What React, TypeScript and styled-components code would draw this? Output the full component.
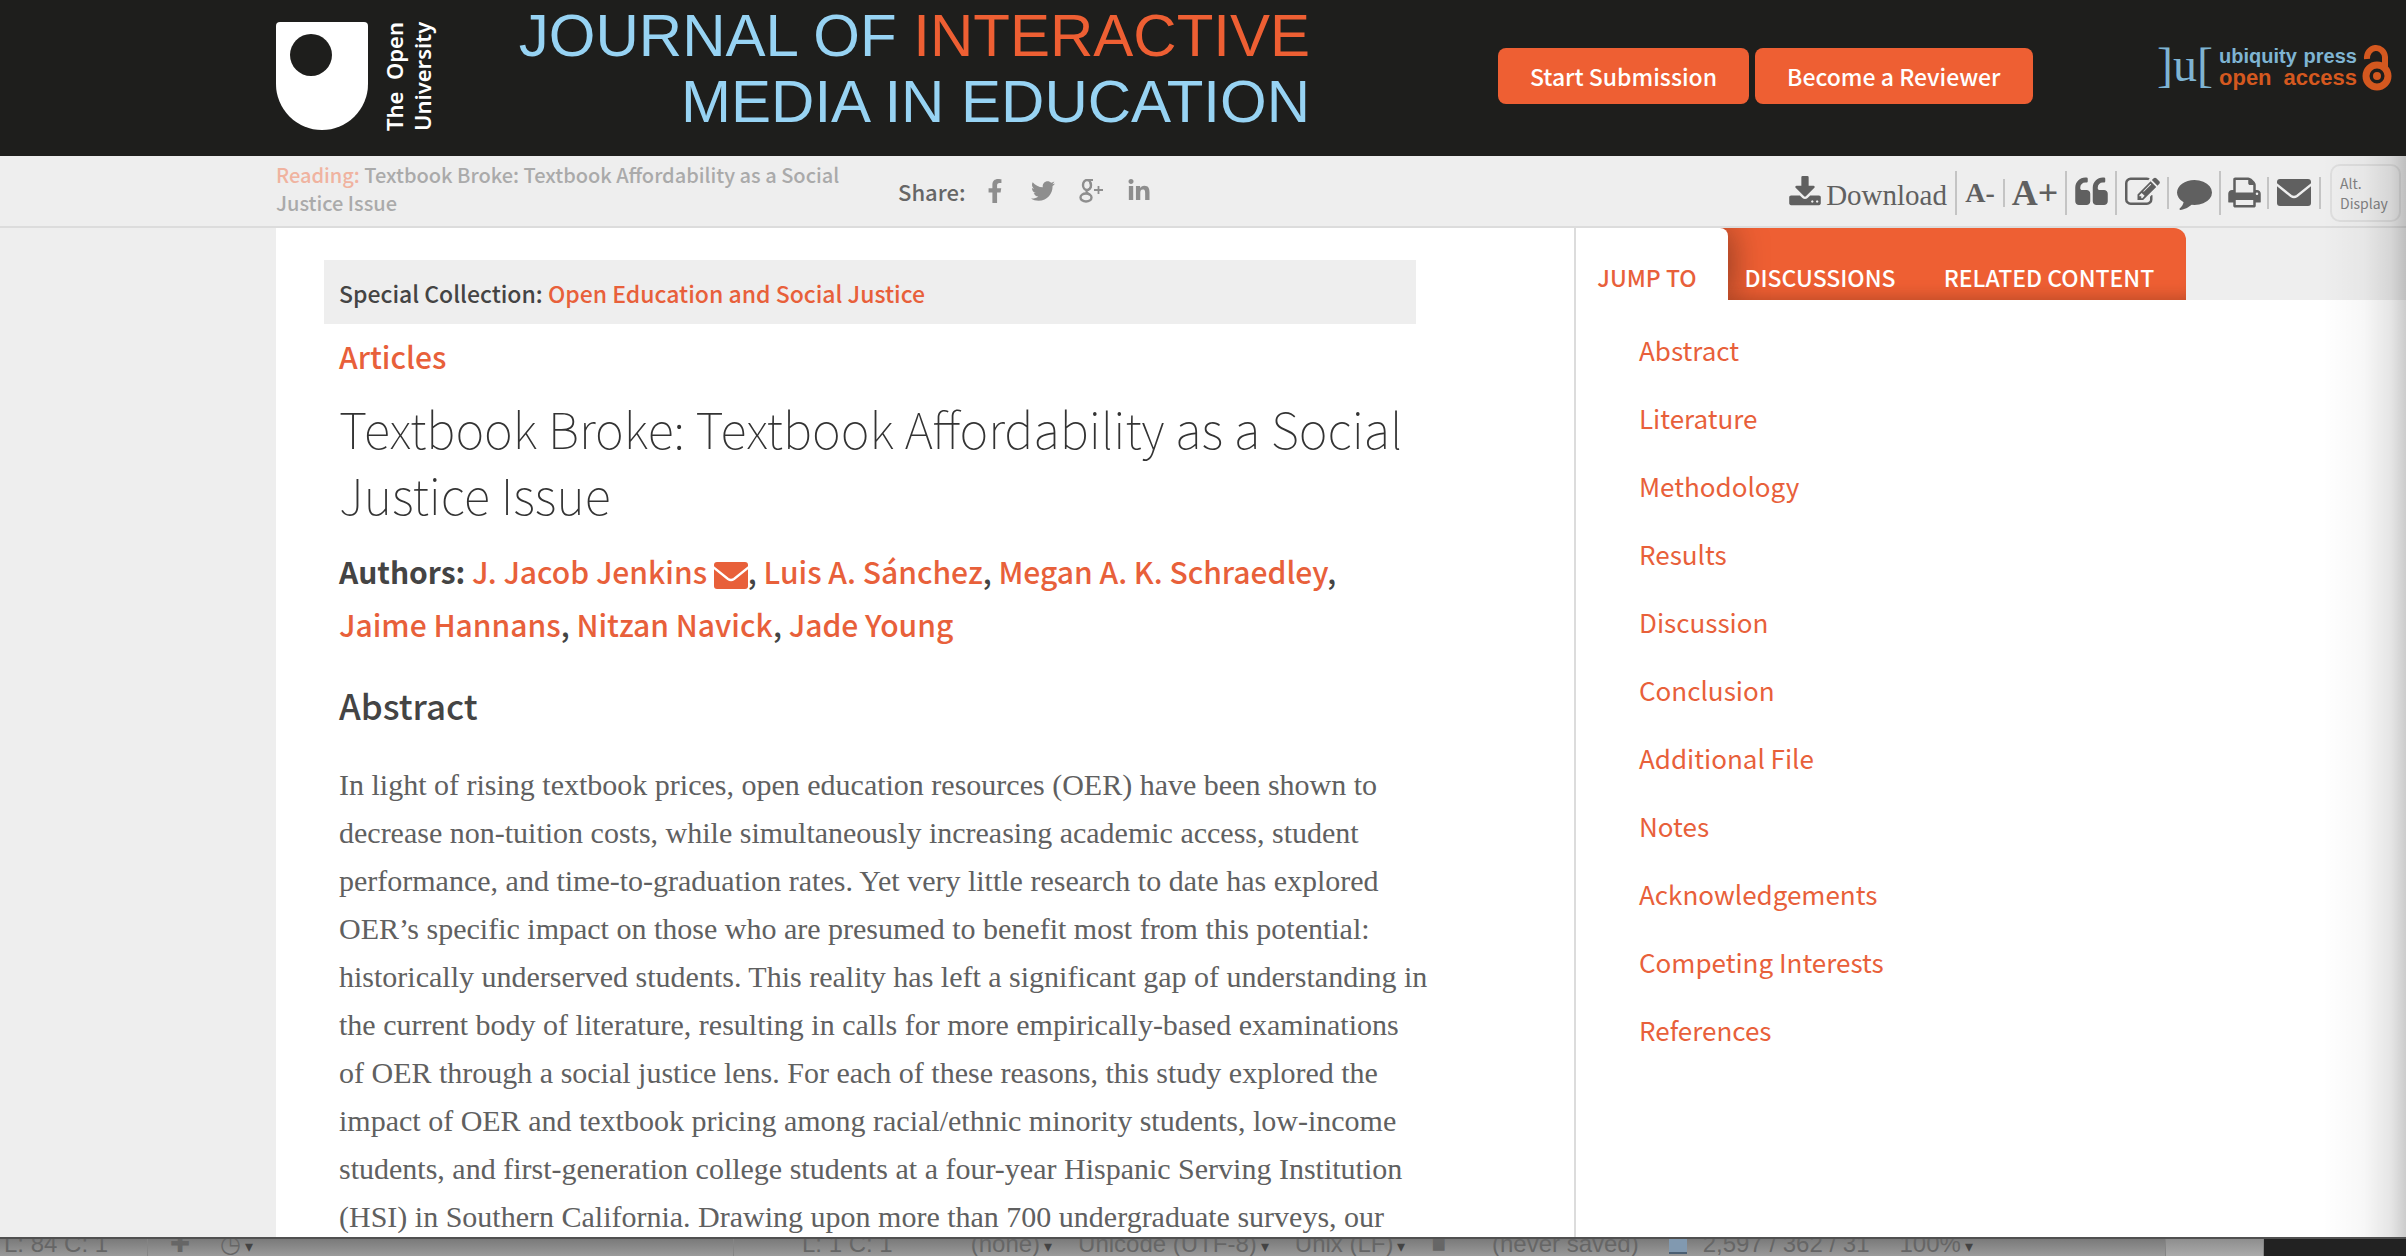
import React from "react";
import styled, { createGlobalStyle } from "styled-components";
import { FaTwitter, FaLinkedinIn, FaFacebookF } from "react-icons/fa";

const sans = `"Noto Sans CJK SC", "Open Sans", sans-serif`;
const serif = `"Liberation Serif", "Times New Roman", serif`;
const orange = "#ee5f33";
const linkOrange = "#e8603a";

const GlobalStyle = createGlobalStyle`
  * { box-sizing: border-box; }
  body { margin: 0; background: #eee; font-family: ${sans}; color: #444; }
  a { color: ${linkOrange}; text-decoration: none; }
  button { font: inherit; border: 0; margin: 0; padding: 0; background: none; cursor: pointer; }
  h1, h2, h3, p, ul { margin: 0; padding: 0; }
`;

const Desktop = styled.div`
  height: 100vh;
  display: flex;
  flex-direction: column;
  overflow: hidden;
`;
const BrowserWindow = styled.div`
  position: relative;
  flex: 1;
  min-height: 0;
  display: flex;
  flex-direction: column;
  overflow: hidden;
`;
const EdgeShade = styled.div`
  position: absolute;
  top: 156px;
  right: 0;
  bottom: 0;
  width: 84px;
  pointer-events: none;
  background: linear-gradient(to right, rgba(0, 0, 0, 0), rgba(0, 0, 0, 0.03) 50%, rgba(0, 0, 0, 0.1) 82%, rgba(0, 0, 0, 0.2));
`;

const Header = styled.header`
  flex: none;
  display: flex;
  height: 156px;
  padding: 0 14px 0 276px;
  background: #1e1e1c;
`;
const OpenLogo = styled.a`
  display: flex;
  gap: 12px;
  padding-top: 22px;
`;
const OpenName = styled.span`
  height: 109px;
  writing-mode: vertical-rl;
  transform: rotate(180deg);
  font: 600 22px/28px "Noto Sans", sans-serif;
  text-align: justify;
  text-align-last: justify;
  white-space: nowrap;
  color: #fff;
`;
const JournalTitle = styled.h1`
  width: 796px;
  margin-left: 78px;
  padding-top: 3px;
  font: 400 60px/66px "Liberation Sans", Arial, sans-serif;
  white-space: nowrap;
  text-align: right;
  color: #97d3f3;
`;
const Accent = styled.span`
  color: ${orange};
`;
const HeaderActions = styled.div`
  display: flex;
  gap: 6px;
  margin: 48px 0 0 188px;
`;
const ActionButton = styled.button`
  height: 56px;
  padding: 0 32px;
  border-radius: 8px;
  background: ${orange};
  color: #fff;
  font-size: 23px;
  font-weight: 500;
  white-space: nowrap;
`;
const Brand = styled.a`
  display: flex;
  margin: 44px 0 0 auto;
  height: 48px;
`;
const BrandMark = styled.span`
  font: 400 48px/42px "Liberation Serif", serif;
  color: #7fb4d2;
`;
const BrandWords = styled.span`
  display: flex;
  flex-direction: column;
  width: 138px;
  margin: 2px 5px 0 6px;
  font: 700 20px/21px "Liberation Sans", Arial, sans-serif;
  text-align-last: justify;
  white-space: nowrap;
  color: #7fb4d2;
`;
const BrandAccess = styled.span`
  font-size: 22px;
  color: #d4581f;
`;

const Toolbar = styled.div`
  flex: none;
  display: flex;
  align-items: center;
  height: 72px;
  padding: 0 5px 0 276px;
  background: #eee;
  border-bottom: 2px solid #dcdcdc;
`;
const Reading = styled.p`
  width: 622px;
  padding: 0 50px 5px 0;
  font-size: 20px;
  line-height: 28px;
  font-weight: 500;
  color: #aaa;
`;
const ReadingLabel = styled.span`
  color: #f0b3a0;
`;
const Share = styled.div`
  display: flex;
  align-items: center;
  gap: 18px;
`;
const ShareLinks = styled.div`
  display: flex;
  align-items: center;
  gap: 24px;
`;
const ShareLabel = styled.span`
  font-size: 22px;
  font-weight: 500;
  color: #666;
`;
const ShareLink = styled.a`
  display: flex;
  justify-content: center;
  width: 24px;
  font-size: 24px;
  color: #8e8e8e;
`;
const Tools = styled.div`
  display: flex;
  align-items: center;
  margin-left: auto;
  padding-top: 3px;
  color: #606060;
`;
const Tool = styled.button<{ $width?: number; $rule?: number }>`
  display: flex;
  align-items: center;
  justify-content: center;
  width: ${(p) => (p.$width ? `${p.$width}px` : "auto")};
  height: ${(p) => p.$rule ?? 44}px;
  border-right: 2px solid #c4c4c4;
  color: #606060;
`;
const DownloadTool = styled(Tool)`
  gap: 4px;
  padding-right: 8px;
  font-family: ${serif};
  font-size: 29px;
`;
const DownloadText = styled.span`
  padding-top: 6px;
`;
const Letter = styled.span<{ $size: number }>`
  font: 700 ${(p) => p.$size}px/44px ${serif};
`;
const AltDisplay = styled.button`
  width: 71px;
  height: 58px;
  margin-left: 9px;
  padding-left: 8px;
  border: 2px solid #dedede;
  border-radius: 10px;
  font-size: 14px;
  line-height: 20px;
  text-align: left;
  color: #828282;
`;

const Body = styled.div`
  flex: 1;
  min-height: 0;
  display: flex;
  padding-left: 276px;
  background: #eee;
`;
const Article = styled.main`
  flex: 1;
  min-width: 0;
  padding: 32px 158px 0 48px;
  background: #fff;
`;
const Collection = styled.div`
  height: 64px;
  padding: 0 15px;
  background: #eee;
  font-size: 23px;
  line-height: 66px;
  font-weight: 500;
`;
const Content = styled.div`
  padding-left: 15px;
`;
const Section = styled.h3`
  margin-top: 8px;
  font-size: 30px;
  line-height: 48px;
  font-weight: 500;
  color: ${linkOrange};
`;
const Title = styled.h2`
  margin-top: 15px;
  font-size: 49px;
  line-height: 66px;
  font-weight: 100;
  color: #333;
`;
const Authors = styled.p`
  margin-top: 18px;
  font-size: 30px;
  line-height: 53px;
  font-weight: 500;
  white-space: nowrap;
`;
const AuthorsLabel = styled.strong`
  font-weight: 700;
`;
const Mail = styled.svg`
  vertical-align: -5px;
`;
const Heading = styled.h3`
  margin-top: 30px;
  font-size: 35px;
  line-height: 48px;
  font-weight: 500;
`;
const Abstract = styled.p`
  margin-top: 32px;
  font: 400 30px/48px ${serif};
  color: #606060;
`;
const Line = styled.span`
  display: block;
  white-space: nowrap;
`;

const Sidebar = styled.aside`
  flex: none;
  width: 832px;
  border-left: 2px solid #dcdcdc;
  background: #fff;
`;
const TabStrip = styled.div`
  display: flex;
  height: 72px;
  background: #eee;
`;
const TabGroup = styled.div`
  display: flex;
  width: 610px;
  overflow: hidden;
  border-radius: 0 12px 0 0;
  background: ${orange};
  box-shadow: inset 0 -14px 16px -12px rgba(100, 40, 20, 0.4);
`;
const Tab = styled.button<{ $active?: boolean; $width: number }>`
  width: ${(p) => p.$width}px;
  height: 72px;
  padding: 26px ${(p) => (p.$active ? 10 : 2)}px 0 0;
  font-size: 23px;
  font-weight: 500;
  white-space: nowrap;
  border-radius: ${(p) => (p.$active ? "0 8px 0 0" : "0")};
  color: ${(p) => (p.$active ? linkOrange : "#fff")};
  background: ${(p) => (p.$active ? "#fff" : "transparent")};
  box-shadow: ${(p) => (p.$active ? "4px 0 32px rgba(60, 30, 20, 0.5)" : "none")};
`;
const Toc = styled.ul`
  padding: 16px 0 0 63px;
  list-style: none;
`;
const TocItem = styled.li`
  font-size: 26px;
  line-height: 68px;
`;

const EditorStrip = styled.footer`
  flex: none;
  display: flex;
  height: 19px;
  overflow: hidden;
  border-top: 2px solid #505050;
  background: #222;
`;
const StripCell = styled.div<{ $width?: number; $inset?: number; $light?: boolean }>`
  display: flex;
  gap: 26px;
  flex: ${(p) => (p.$width ? "none" : "1")};
  width: ${(p) => (p.$width ? `${p.$width}px` : "auto")};
  padding-left: ${(p) => p.$inset ?? 4}px;
  border-right: 1px solid #858585;
  background: ${(p) => (p.$light ? "linear-gradient(#8e8e8e, #aaa)" : "linear-gradient(#7a7a7a, #9a9a9a)")};
  font: 400 24px/10px "Liberation Sans", Arial, sans-serif;
  white-space: nowrap;
  color: #666;
`;
const StripDesktop = styled.div`
  flex: none;
  width: 142px;
`;
const StripText = styled.span<{ $arrow?: boolean; $after?: number }>`
  margin-right: ${(p) => p.$after ?? 0}px;
  &::after {
    content: "${(p) => (p.$arrow ? "▾" : "")}";
    color: #444;
    font-size: 16px;
    margin-left: 4px;
  }
`;
const FileIcon = styled.span`
  width: 18px;
  height: 15px;
  background: #8199b0;
  border-bottom: 2px solid #4b5f73;
  margin-right: -10px;
`;

const Glyph = ({ d, size = 35 }: { d: string; size?: number }) => (
  <svg width={size} height={size} viewBox="0 0 1792 1792" fill="currentColor" aria-hidden="true">
    <path d={d} />
  </svg>
);

const icons = {
  download:
    "M1344 1344q0-26-19-45t-45-19-45 19-19 45 19 45 45 19 45-19 19-45zm256 0q0-26-19-45t-45-19-45 19-19 45 19 45 45 19 45-19 19-45zm128-224v320q0 40-28 68t-68 28h-1472q-40 0-68-28t-28-68v-320q0-40 28-68t68-28h465l135 136q58 56 136 56t136-56l136-136h464q40 0 68 28t28 68zm-325-569q17 41-14 70l-448 448q-18 19-45 19t-45-19l-448-448q-31-29-14-70 17-39 59-39h256v-448q0-26 19-45t45-19h256q26 0 45 19t19 45v448h256q42 0 59 39z",
  quote:
    "M832 960v384q0 80-56 136t-136 56h-384q-80 0-136-56t-56-136v-704q0-104 40.5-198.5t109.5-163.5 163.5-109.5 198.5-40.5h64q26 0 45 19t19 45v128q0 26-19 45t-45 19h-64q-106 0-181 75t-75 181v32q0 40 28 68t68 28h224q80 0 136 56t56 136zm896 0v384q0 80-56 136t-136 56h-384q-80 0-136-56t-56-136v-704q0-104 40.5-198.5t109.5-163.5 163.5-109.5 198.5-40.5h64q26 0 45 19t19 45v128q0 26-19 45t-45 19h-64q-106 0-181 75t-75 181v32q0 40 28 68t68 28h224q80 0 136 56t56 136z",
  edit: "M888 1184l116-116-152-152-116 116v56h96v96h56zm440-720q-16-16-33 1l-350 350q-17 17-1 33t33-1l350-350q17-17 1-33zm80 594v190q0 119-84.5 203.5t-203.5 84.5h-832q-119 0-203.5-84.5t-84.5-203.5v-832q0-119 84.5-203.5t203.5-84.5h832q63 0 117 25 15 7 18 23 3 17-9 29l-49 49q-14 14-32 8-23-6-45-6h-832q-66 0-113 47t-47 113v832q0 66 47 113t113 47h832q66 0 113-47t47-113v-126q0-13 9-22l64-64q15-15 35-7t20 29zm-96-738l288 288-672 672h-288v-288zm444 132l-92 92-288-288 92-92q28-28 68-28t68 28l152 152q28 28 28 68t-28 68z",
  comment:
    "M1792 896q0 174-120 321.5t-326 233-450 85.5q-70 0-145-8-198 175-460 242-49 14-114 22-17 2-30.5-9t-17.5-29v-1q-3-4-.5-12t2-10 4.5-9.5l6-9 7-8.5 8-9q7-8 31-34.5t34.5-38 31-39.5 32.5-51 27-59 26-76q-157-89-247.5-220t-90.5-281q0-130 71-248.5t191-204.5 286-136.5 348-50.5q244 0 450 85.5t326 233 120 321.5z",
  print:
    "M448 1536h896v-256h-896v256zm0-640h896v-384h-160q-40 0-68-28t-28-68v-160h-640v640zm1152 64q0-26-19-45t-45-19-45 19-19 45 19 45 45 19 45-19 19-45zm128 0v416q0 13-9.5 22.5t-22.5 9.5h-224v160q0 40-28 68t-68 28h-960q-40 0-68-28t-28-68v-160h-224q-13 0-22.5-9.5t-9.5-22.5v-416q0-79 56.5-135.5t135.5-56.5h64v-544q0-40 28-68t68-28h672q40 0 88 20t76 48l152 152q28 28 48 76t20 88v256h64q79 0 135.5 56.5t56.5 135.5z",
};

const Envelope = ({ line }: { line: string }) => (
  <Mail width="34" height="27" viewBox="0 0 34 27" aria-hidden="true">
    <rect width="34" height="27" rx="3" fill="currentColor" />
    <path d="M-1 5 L14 17 Q17 19 20 17 L35 5" fill="none" stroke={line} strokeWidth="2.4" />
  </Mail>
);

const abstractLines = [
  "In light of rising textbook prices, open education resources (OER) have been shown to",
  "decrease non-tuition costs, while simultaneously increasing academic access, student",
  "performance, and time-to-graduation rates. Yet very little research to date has explored",
  "OER’s specific impact on those who are presumed to benefit most from this potential:",
  "historically underserved students. This reality has left a significant gap of understanding in",
  "the current body of literature, resulting in calls for more empirically-based examinations",
  "of OER through a social justice lens. For each of these reasons, this study explored the",
  "impact of OER and textbook pricing among racial/ethnic minority students, low-income",
  "students, and first-generation college students at a four-year Hispanic Serving Institution",
  "(HSI) in Southern California. Drawing upon more than 700 undergraduate surveys, our",
];

const tocEntries = [
  "Abstract",
  "Literature",
  "Methodology",
  "Results",
  "Discussion",
  "Conclusion",
  "Additional File",
  "Notes",
  "Acknowledgements",
  "Competing Interests",
  "References",
];

export default function App() {
  return (
    <Desktop>
      <GlobalStyle />
      <BrowserWindow>
        <Header>
          <OpenLogo href="#">
            <svg width="92" height="108" viewBox="0 0 92 108" aria-hidden="true">
              <path d="M4 0H88Q92 0 92 4V62A46 46 0 0 1 0 62V4Q0 0 4 0Z" fill="#fff" />
              <circle cx="35" cy="33" r="21" fill="#1e1e1c" />
            </svg>
            <OpenName>
              The Open
              <br />
              University
            </OpenName>
          </OpenLogo>
          <JournalTitle>
            JOURNAL OF <Accent>INTERACTIVE</Accent>
            <br />
            MEDIA IN EDUCATION
          </JournalTitle>
          <HeaderActions>
            <ActionButton>Start Submission</ActionButton>
            <ActionButton>Become a Reviewer</ActionButton>
          </HeaderActions>
          <Brand href="#">
            <BrandMark>]u[</BrandMark>
            <BrandWords>
              <span>ubiquity press</span>
              <BrandAccess>open access</BrandAccess>
            </BrandWords>
            <svg width="30" height="48" viewBox="0 0 30 48" fill="none" stroke="#d4581f" aria-hidden="true">
              <circle cx="15" cy="32" r="11" strokeWidth="7" />
              <circle cx="15" cy="32" r="4" fill="#d4581f" stroke="none" />
              <path d="M5 15A9 10 0 0 1 23 13V26" strokeWidth="6" />
            </svg>
          </Brand>
        </Header>

        <Toolbar>
          <Reading>
            <ReadingLabel>Reading:</ReadingLabel> Textbook Broke: Textbook Affordability as a Social Justice Issue
          </Reading>
          <Share>
            <ShareLabel>Share:</ShareLabel>
            <ShareLinks>
              <ShareLink href="#" aria-label="Facebook">
                <FaFacebookF />
              </ShareLink>
              <ShareLink href="#" aria-label="Twitter">
                <FaTwitter />
              </ShareLink>
              <ShareLink href="#" aria-label="Google Plus">
                <svg width="24" height="24" viewBox="0 0 24 24" fill="none" stroke="currentColor">
                  <ellipse cx="8" cy="6" rx="4" ry="5" strokeWidth="2.4" />
                  <path d="M7 1H14M11 3C13 8 12 9 9 11C5 13 9 14 11 16" strokeWidth="2" />
                  <ellipse cx="7" cy="18.5" rx="5.5" ry="4" strokeWidth="2.4" />
                  <path d="M15 11H24M19.5 7V15" strokeWidth="1.8" />
                </svg>
              </ShareLink>
              <ShareLink href="#" aria-label="LinkedIn">
                <FaLinkedinIn />
              </ShareLink>
            </ShareLinks>
          </Share>
          <Tools>
            <DownloadTool>
              <Glyph d={icons.download} size={34} />
              <DownloadText>Download</DownloadText>
            </DownloadTool>
            <Tool $width={48} $rule={28}>
              <Letter $size={28}>A-</Letter>
            </Tool>
            <Tool $width={62}>
              <Letter $size={36}>A+</Letter>
            </Tool>
            <Tool $width={50} aria-label="Cite">
              <Glyph d={icons.quote} />
            </Tool>
            <Tool $width={52} $rule={32} aria-label="Annotate">
              <Glyph d={icons.edit} />
            </Tool>
            <Tool $width={52} aria-label="Comment">
              <Glyph d={icons.comment} />
            </Tool>
            <Tool $width={48} $rule={32} aria-label="Print">
              <Glyph d={icons.print} />
            </Tool>
            <Tool $width={52} $rule={32} aria-label="Email">
              <Envelope line="#eee" />
            </Tool>
            <AltDisplay>
              Alt.
              <br />
              Display
            </AltDisplay>
          </Tools>
        </Toolbar>

        <Body>
          <Article>
            <Collection>
              Special Collection: <a href="#">Open Education and Social Justice</a>
            </Collection>
            <Content>
              <Section>Articles</Section>
              <Title>
                Textbook Broke: Textbook Affordability as a Social
                <br />
                Justice Issue
              </Title>
              <Authors>
                <AuthorsLabel>Authors:</AuthorsLabel>{" "}
                <a href="#">
                  J. Jacob Jenkins <Envelope line="#fff" />
                </a>
                , <a href="#">Luis A. Sánchez</a>, <a href="#">Megan A. K. Schraedley</a>,
                <br />
                <a href="#">Jaime Hannans</a>, <a href="#">Nitzan Navick</a>, <a href="#">Jade Young</a>
              </Authors>
              <Heading>Abstract</Heading>
              <Abstract>
                {abstractLines.map((text) => (
                  <Line key={text}>{text} </Line>
                ))}
              </Abstract>
            </Content>
          </Article>
          <Sidebar>
            <TabStrip>
              <TabGroup role="tablist">
                <Tab role="tab" aria-selected $active $width={152}>
                  JUMP TO
                </Tab>
                <Tab role="tab" $width={186}>
                  DISCUSSIONS
                </Tab>
                <Tab role="tab" $width={272}>
                  RELATED CONTENT
                </Tab>
              </TabGroup>
            </TabStrip>
            <Toc>
              {tocEntries.map((entry) => (
                <TocItem key={entry}>
                  <a href="#">{entry}</a>
                </TocItem>
              ))}
            </Toc>
          </Sidebar>
        </Body>
        <EdgeShade />
      </BrowserWindow>
      <EditorStrip>
        <StripCell $width={148}>
          <StripText>L: 84 C: 1</StripText>
        </StripCell>
        <StripCell $width={586} $inset={22}>
          <StripText>✚</StripText>
          <StripText $arrow>◷</StripText>
        </StripCell>
        <StripCell $inset={68}>
          <StripText $after={48}>L: 1 C: 1</StripText>
          <StripText $arrow>(none)</StripText>
          <StripText $arrow>Unicode (UTF-8)</StripText>
          <StripText $arrow>Unix (LF)</StripText>
          <StripText $after={16}>■</StripText>
          <StripText>(never saved)</StripText>
          <FileIcon />
          <StripText>2,597 / 362 / 31</StripText>
          <StripText $arrow>100%</StripText>
        </StripCell>
        <StripCell $width={98} $light />
        <StripDesktop />
      </EditorStrip>
    </Desktop>
  );
}
